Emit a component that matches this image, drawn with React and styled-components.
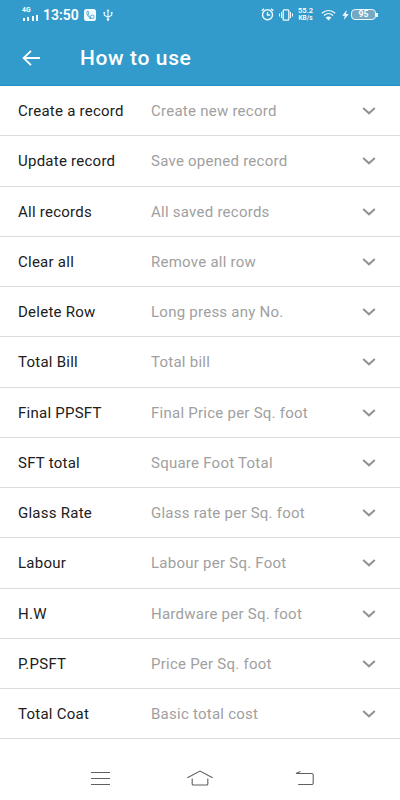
import React from "react";
import styled, { createGlobalStyle } from "styled-components";

const GlobalStyle = createGlobalStyle`
  * {
    box-sizing: border-box;
  }
  body {
    margin: 0;
    background: #ffffff;
    font-family: Roboto, "Liberation Sans", sans-serif;
  }
`;

const Screen = styled.div`
  display: flex;
  flex-direction: column;
  width: 400px;
  height: 800px;
  overflow: hidden;
  background: #ffffff;
`;

const Header = styled.header`
  height: 86px;
  color: #ffffff;
  background: #329bcb;
  border-bottom: 1px solid #2290c4;
`;

const StatusBar = styled.div`
  display: flex;
  justify-content: space-between;
  height: 29px;
  padding: 0 22px 0 22px;
`;

const StatusGroup = styled.div`
  display: flex;
  align-items: center;

  svg {
    display: block;
    flex: none;
  }
`;

const Gap = styled.span`
  width: ${({ $size }) => $size}px;
`;

const Signal = styled.div`
  width: 17px;
  margin: -2px 4px 0 0;
  font-size: 6.8px;
  font-weight: 700;
  line-height: 6px;
`;

const Clock = styled.span`
  width: 36px;
  margin-right: 5px;
  font-size: 14px;
  font-weight: 600;
  white-space: nowrap;
`;

const Speed = styled.div`
  width: 17px;
  margin: 0 7px 0 4px;
  font-size: 7.5px;
  font-weight: 600;
  line-height: 6.5px;
  text-align: center;
  white-space: nowrap;

  small {
    display: block;
    font-size: 6.5px;
  }
`;

const Battery = styled.div`
  display: flex;
  align-items: center;

  &::after {
    content: "";
    width: 2px;
    height: 4px;
    background: #e8f8ff;
  }
`;

const BatteryLevel = styled.div`
  width: 25px;
  height: 11px;
  border: 1px solid #e8f8ff;
  border-radius: 4px;
  background: #75a9c3;
  font-size: 8.6px;
  font-weight: 700;
  line-height: 9.5px;
  text-align: center;
`;

const Toolbar = styled.div`
  display: flex;
  align-items: center;
  height: 57px;
  padding-left: 22px;
`;

const Title = styled.h1`
  margin: 1px 0 0 40px;
  font-size: 21px;
  font-weight: 500;
  letter-spacing: 0.62px;
  line-height: 24px;
`;

const List = styled.ul`
  margin: 0;
  padding: 0;
  list-style: none;
`;

const Row = styled.li`
  display: grid;
  grid-template-columns: 133px 1fr 14px;
  align-items: center;
  height: 50.25px;
  padding: 1px 24px 0 18px;
  border-bottom: 1px solid #dcdcdc;
  font-size: 15px;
  letter-spacing: 0.25px;
  white-space: nowrap;
`;

const Name = styled.span`
  color: #202020;
`;

const Description = styled.span`
  color: #a0a0a0;
`;

const NavBar = styled.nav`
  display: flex;
  flex: 1;
  align-items: center;
  justify-content: space-between;
  padding: 17px 86px 0 91px;
`;

const Bars = () => (
  <svg width="18" height="8" viewBox="0 0 18 8" fill="#f2fbff">
    <path d="M1 5h2v3H1zM5 4h2v4H5zM10 3h2v5h-2zM14 2h2v6h-2z" />
  </svg>
);

const CallIcon = () => (
  <svg width="12" height="12" viewBox="0 0 12 12" fill="none">
    <rect width="12" height="12" rx="2.5" fill="#f2fbff" />
    <path
      d="M4 2C2.8 2.4 2.6 3.5 3 5c.7 2.3 2.3 4 4 4.6M4 2l1 2-1 1c.4 1.2 1 2 2 2.7M7 9.6l-2-.8"
      stroke="#329bcb"
      strokeWidth="0.8"
    />
    <circle cx="8.3" cy="7.8" r="1.8" stroke="#329bcb" strokeWidth="0.8" />
  </svg>
);

const UsbIcon = () => (
  <svg width="10" height="12" viewBox="0 0 10 12" fill="none" stroke="#e8f8ff">
    <path d="M5 1v10M1.3 4v2.2L5 8.3l3.7-2.1V4" strokeWidth="1.1" />
    <path d="M5 0l1.6 2.3H3.4zM.4 3h1.8v1.6H.4zM7.8 3h1.8v1.6H7.8z" fill="#e8f8ff" stroke="none" />
    <circle cx="5" cy="10.6" r="1.3" fill="#e8f8ff" stroke="none" />
  </svg>
);

const AlarmIcon = () => (
  <svg width="13" height="13" viewBox="0 0 13 13" fill="none" stroke="#f2fbff" strokeWidth="1.4">
    <circle cx="6.5" cy="6.8" r="5" />
    <path d="M6.5 4v3h2.7M.7 2.7L3 .8M12.3 2.7L10 .8" />
  </svg>
);

const VibrateIcon = () => (
  <svg width="14" height="12" viewBox="0 0 14 12" fill="none" stroke="#f2fbff">
    <rect x="4.2" y="0.8" width="5.6" height="10.4" rx="1" strokeWidth="1.3" />
    <path d="M2.5 3v6M.5 4.5v3M11.5 3v6M13.5 4.5v3" />
  </svg>
);

const WifiIcon = () => (
  <svg width="15" height="12" viewBox="0 0 15 12" fill="none" stroke="#f2fbff" strokeWidth="1.2">
    <path d="M.8 4.2C4.6.6 10.4.6 14.2 4.2M3 6.5c2.6-2.4 6.4-2.4 9 0" />
    <path d="M4.6 8.6c1.7-1.5 4.1-1.5 5.8 0L7.5 11.5z" fill="#f2fbff" stroke="none" />
  </svg>
);

const BoltIcon = () => (
  <svg width="7" height="10" viewBox="0 0 7 10" fill="#f2fbff">
    <path d="M4.7 0L.2 5.8h2.6L1.8 10l5-6H4.1z" />
  </svg>
);

const BackArrow = () => (
  <svg width="18" height="16" viewBox="0 0 18 16" fill="none" stroke="#ffffff" strokeWidth="1.8">
    <path d="M18 8H1.6M9 .8L1.6 8 9 15.2" />
  </svg>
);

const Chevron = () => (
  <svg width="14" height="8" viewBox="0 0 14 8" fill="none" stroke="#929292" strokeWidth="2">
    <path d="M1.2 1L7 6.3 12.8 1" />
  </svg>
);

const MenuIcon = () => (
  <svg width="19" height="14" viewBox="0 0 19 14" stroke="#606060" strokeWidth="1.1">
    <path d="M0 1.5h19M0 7.5h19M0 13.5h19" />
  </svg>
);

const HomeIcon = () => (
  <svg width="26" height="16" viewBox="0 0 26 16" fill="none" stroke="#606060" strokeWidth="1.1">
    <path d="M.4 7.7L13 1l12.6 6.7M5.2 8.5V14q0 1 1 1h13.6q1 0 1-1V8.5" />
  </svg>
);

const ReturnIcon = () => (
  <svg width="19" height="14" viewBox="0 0 19 14" fill="none" stroke="#606060" strokeWidth="1.1">
    <path d="M5.4.5L1 2.5h15.8q1.4 0 1.4 1.4v8.2q0 1.4-1.4 1.4H3.2" />
  </svg>
);

const HomeButton = styled.span`
  display: flex;
  margin-right: 5px;
`;

const items = [
  ["Create a record", "Create new record"],
  ["Update record", "Save opened record"],
  ["All records", "All saved records"],
  ["Clear all", "Remove all row"],
  ["Delete Row", "Long press any No."],
  ["Total Bill", "Total bill"],
  ["Final PPSFT", "Final Price per Sq. foot"],
  ["SFT total", "Square Foot Total"],
  ["Glass Rate", "Glass rate per Sq. foot"],
  ["Labour", "Labour per Sq. Foot"],
  ["H.W", "Hardware per Sq. foot"],
  ["P.PSFT", "Price Per Sq. foot"],
  ["Total Coat", "Basic total cost"],
];

const App = () => {
  return (
    <Screen>
      <GlobalStyle />
      <Header>
        <StatusBar>
          <StatusGroup>
            <Signal>
              4G
              <Bars />
            </Signal>
            <Clock>13:50</Clock>
            <CallIcon />
            <Gap $size={7} />
            <UsbIcon />
          </StatusGroup>
          <StatusGroup>
            <AlarmIcon />
            <Gap $size={5} />
            <VibrateIcon />
            <Speed>
              55.2
              <small>KB/s</small>
            </Speed>
            <WifiIcon />
            <Gap $size={6} />
            <BoltIcon />
            <Gap $size={2} />
            <Battery>
              <BatteryLevel>95</BatteryLevel>
            </Battery>
          </StatusGroup>
        </StatusBar>
        <Toolbar>
          <BackArrow />
          <Title>How to use</Title>
        </Toolbar>
      </Header>
      <List>
        {items.map(([name, description]) => (
          <Row key={name}>
            <Name>{name}</Name>
            <Description>{description}</Description>
            <Chevron />
          </Row>
        ))}
      </List>
      <NavBar>
        <MenuIcon />
        <HomeButton>
          <HomeIcon />
        </HomeButton>
        <ReturnIcon />
      </NavBar>
    </Screen>
  );
};

export default App;
